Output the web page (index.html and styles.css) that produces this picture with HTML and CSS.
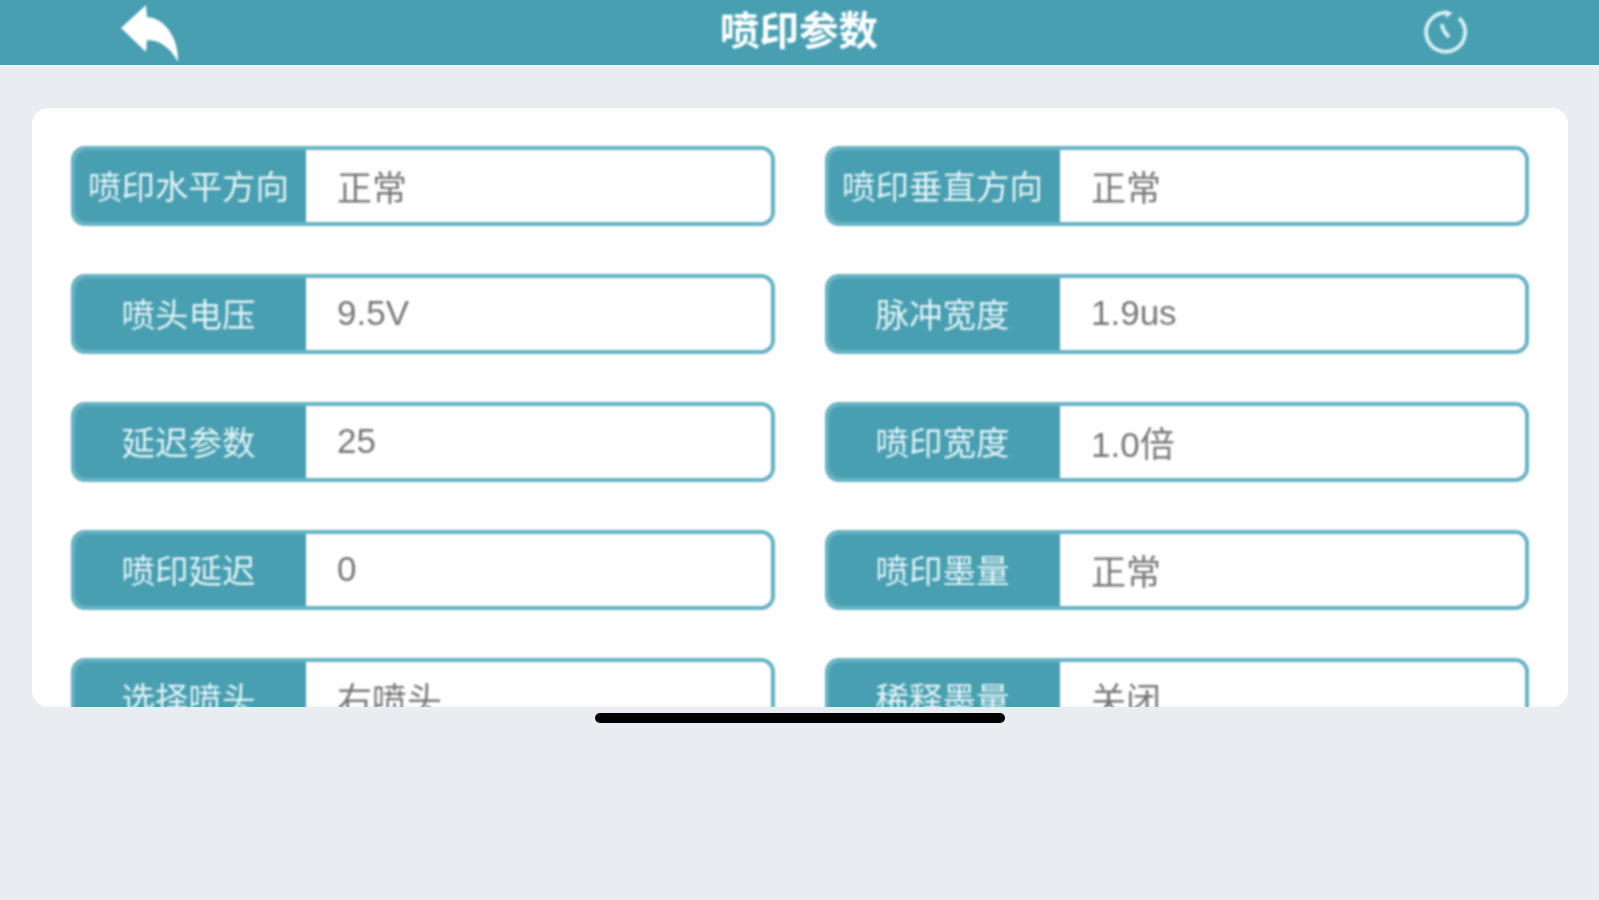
FILE: index.html
```html
<!DOCTYPE html>
<html>
<head>
    <title>喷印参数</title>
    <link rel="stylesheet" href="styles.css">
</head>
<body>
    <header class="topbar">
        <svg class="back-icon" width="60" height="60" viewBox="0 0 60 60">
            <path d="M1 24 L26 1 L27 13 C46 14 59 36 58 58 C51 45 41 36 27 36 L26 48 Z" fill="#fff"/>
        </svg>
        <h1>喷印参数</h1>
        <svg class="clock-icon" width="46" height="46" viewBox="0 0 46 46">
            <path d="M27 4 A19.5 19.5 0 1 0 37 9" fill="none" stroke="#d3eef2" stroke-width="4"/>
            <path d="M22 1 L31 4 L24 9 Z" fill="#d3eef2"/>
            <path d="M20 15 C20 20 23 24 27 28" fill="none" stroke="#d3eef2" stroke-width="4"/>
        </svg>
    </header>

    <main class="content">
        <div class="card">
            <div class="param-grid">
                <div class="param"><span class="param-label">喷印水平方向</span><span class="param-value">正常</span></div>
                <div class="param"><span class="param-label">喷印垂直方向</span><span class="param-value">正常</span></div>
                <div class="param"><span class="param-label">喷头电压</span><span class="param-value">9.5V</span></div>
                <div class="param"><span class="param-label">脉冲宽度</span><span class="param-value">1.9us</span></div>
                <div class="param"><span class="param-label">延迟参数</span><span class="param-value">25</span></div>
                <div class="param"><span class="param-label">喷印宽度</span><span class="param-value">1.0倍</span></div>
                <div class="param"><span class="param-label">喷印延迟</span><span class="param-value">0</span></div>
                <div class="param"><span class="param-label">喷印墨量</span><span class="param-value">正常</span></div>
                <div class="param"><span class="param-label">选择喷头</span><span class="param-value">右喷头</span></div>
                <div class="param"><span class="param-label">稀释墨量</span><span class="param-value">关闭</span></div>
            </div>
        </div>
    </main>

    <div class="home-bar"></div>
</body>
</html>
```

FILE: styles.css
```css
:root {
    --teal: #479fb1;
    --teal-border: #65b2c1;
    --page-bg: #e9edf1;
}

* {
    margin: 0;
    padding: 0;
    box-sizing: border-box;
}

body {
    font-family: "Liberation Sans", "Noto Sans CJK SC", sans-serif;
    background-color: var(--page-bg);
    height: 900px;
    overflow: hidden;
}

.topbar {
    height: 65px;
    background: var(--teal);
    display: flex;
    align-items: center;
    justify-content: space-between;
    padding: 0 131px 0 120px;
    box-shadow: 0 2px 2px #f4f6f8;
}

.topbar h1 {
    font-size: 39.5px;
    font-weight: 700;
    line-height: 60px;
    color: #fff;
    margin-left: -4px;
    margin-top: -4px;
    filter: blur(1px);
}

.back-icon {
    margin-top: 2px;
    filter: blur(0.8px);
}

.clock-icon {
    margin-top: -2px;
    filter: blur(0.8px);
}

.content {
    padding: 43px 31px 0 32px;
}

.card {
    height: 599px;
    background: #fff;
    border-radius: 16px;
    padding: 38px 39px 0;
    overflow: hidden;
}

.param-grid {
    display: grid;
    grid-template-columns: 704px 704px;
    column-gap: 50px;
    row-gap: 48px;
    filter: blur(0.9px);
}

.param {
    height: 80px;
    display: flex;
    border: 4px solid var(--teal-border);
    border-radius: 14px;
    overflow: hidden;
}

.param-label {
    width: 235px;
    margin: -4px 0 -4px -4px;
    padding: 0 2px 4px 2px;
    background: var(--teal);
    color: #e4f3f6;
    font-size: 33.5px;
    display: flex;
    align-items: center;
    justify-content: center;
    white-space: nowrap;
}

.param-value {
    flex: 1;
    padding: 0 0 2px 31px;
    color: #777;
    font-size: 35px;
    display: flex;
    align-items: center;
    background: #fff;
}

.home-bar {
    position: absolute;
    left: 595px;
    top: 713px;
    width: 410px;
    height: 10px;
    background: #000;
    border-radius: 5px;
    filter: blur(0.6px);
}
```
